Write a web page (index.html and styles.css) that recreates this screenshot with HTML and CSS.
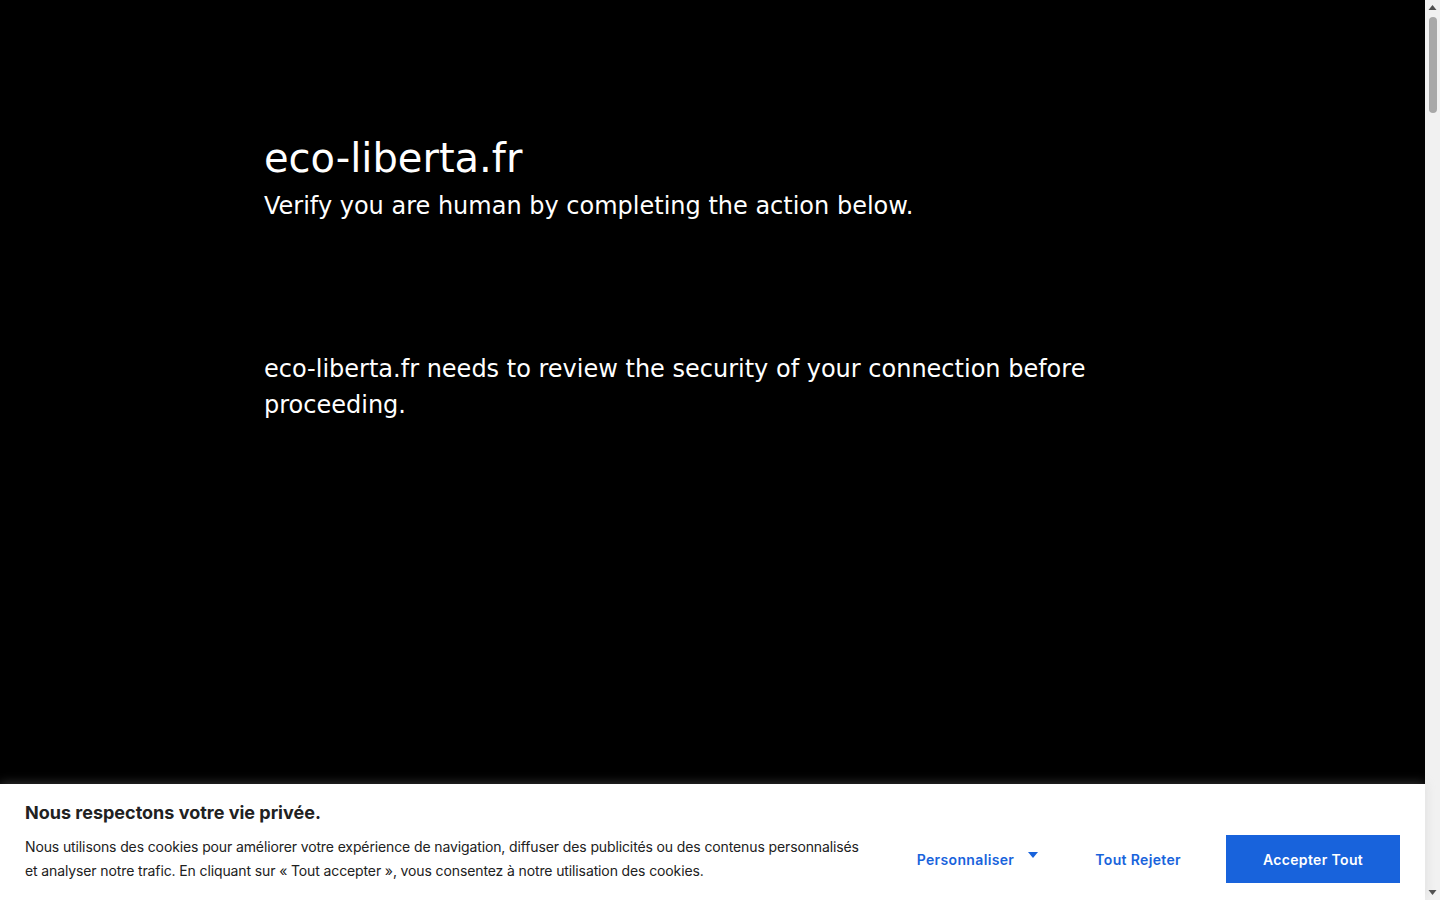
FILE: index.html
```html
<!DOCTYPE html>
<html lang="en">
<head>
  <meta charset="utf-8">
  <title>Just a moment...</title>
  <link rel="stylesheet" href="styles.css">
</head>
<body>

<div class="page">
  <div class="main-content">
    <h1 class="zone-name">eco-liberta.fr</h1>
    <h2 class="challenge-text">Verify you are human by completing the action below.</h2>
    <div class="challenge-box"></div>
    <div class="core-msg">eco-liberta.fr needs to review the security of your connection before proceeding.</div>
  </div>

  <div class="cky-consent-bar">
    <div class="cky-notice">
      <p class="cky-title">Nous respectons votre vie privée.</p>
      <p class="cky-notice-des">Nous utilisons des cookies pour améliorer votre expérience de navigation, diffuser des publicités ou des contenus personnalisés et analyser notre trafic. En cliquant sur « Tout accepter », vous consentez à notre utilisation des cookies.</p>
    </div>
    <div class="cky-btn-wrapper">
      <button class="cky-btn cky-btn-customize">Personnaliser
        <svg class="cky-caret" width="10" height="6" viewBox="0 0 10 6"><path d="M0 0h10L5 6z" fill="#1863dc"/></svg>
      </button>
      <button class="cky-btn cky-btn-reject">Tout Rejeter</button>
      <button class="cky-btn cky-btn-accept">Accepter Tout</button>
    </div>
  </div>
</div>

<!-- fake page scrollbar -->
<div class="scrollbar">
  <svg width="15" height="15" viewBox="0 0 15 15"><path d="M3.5 10h8L7.5 5z" fill="#505050"/></svg>
  <div class="scrollbar-track">
    <div class="scrollbar-thumb"></div>
  </div>
  <svg width="15" height="15" viewBox="0 0 15 15"><path d="M3.5 5h8L7.5 10z" fill="#505050"/></svg>
</div>

</body>
</html>
```

FILE: styles.css
```css
html {
  background-color: #000;
}

body {
  margin: 0;
  height: 100vh;
  display: flex;
  overflow: hidden;
  background-color: #000;
  color: #fff;
  font-family: "DejaVu Sans", system-ui, sans-serif;
}

.page {
  flex: 1;
  position: relative;
}

.main-content {
  margin: 134px 0 0 264px;
  max-width: 900px;
}

.zone-name {
  margin: 0;
  font-size: 40px;
  font-weight: 400;
  line-height: 48px;
}

.challenge-text {
  margin: 0;
  font-size: 24px;
  font-weight: 400;
  line-height: 48px;
}

.challenge-box {
  height: 121px;
}

.core-msg {
  font-size: 24px;
  line-height: 36px;
}

/* cookie banner */
.cky-consent-bar {
  position: absolute;
  left: 0;
  right: 0;
  bottom: 0;
  display: flex;
  align-items: center;
  justify-content: space-between;
  padding: 17px 25px;
  background-color: #fff;
  color: #212121;
  box-shadow: 0 -1px 10px 0 rgba(172, 171, 171, 0.3);
  font-family: Inter, "Noto Sans", sans-serif;
}

.cky-notice {
  width: 840px;
}

.cky-title {
  margin: 0 0 10px 0;
  font-size: 18px;
  font-weight: 700;
  line-height: 24px;
  color: #212121;
}

.cky-notice-des {
  margin: 0;
  font-size: 14px;
  line-height: 24px;
  letter-spacing: -0.12px;
  color: #212121;
}

.cky-btn-wrapper {
  display: flex;
  align-items: center;
  margin-top: 34px;
}

.cky-btn {
  border: none;
  background: none;
  font-family: inherit;
  font-size: 14px;
  font-weight: 600;
  letter-spacing: 0.35px;
  color: #1863dc;
  cursor: pointer;
}

.cky-btn-customize {
  display: flex;
  align-items: center;
  padding: 0;
  margin-right: 57px;
}

.cky-caret {
  margin-left: 14px;
  margin-top: -8px;
}

.cky-btn-reject {
  padding: 0;
  margin-right: 45px;
}

.cky-btn-accept {
  width: 174px;
  height: 48px;
  background-color: #1863dc;
  color: #fff;
}

/* scrollbar */
.scrollbar {
  width: 15px;
  display: flex;
  flex-direction: column;
  background-color: #f1f1f1;
}

.scrollbar-track {
  flex: 1;
  padding-top: 2px;
}

.scrollbar-thumb {
  width: 8px;
  height: 96px;
  margin: 0 auto;
  border-radius: 4px;
  background-color: #a8a8a8;
}
```
